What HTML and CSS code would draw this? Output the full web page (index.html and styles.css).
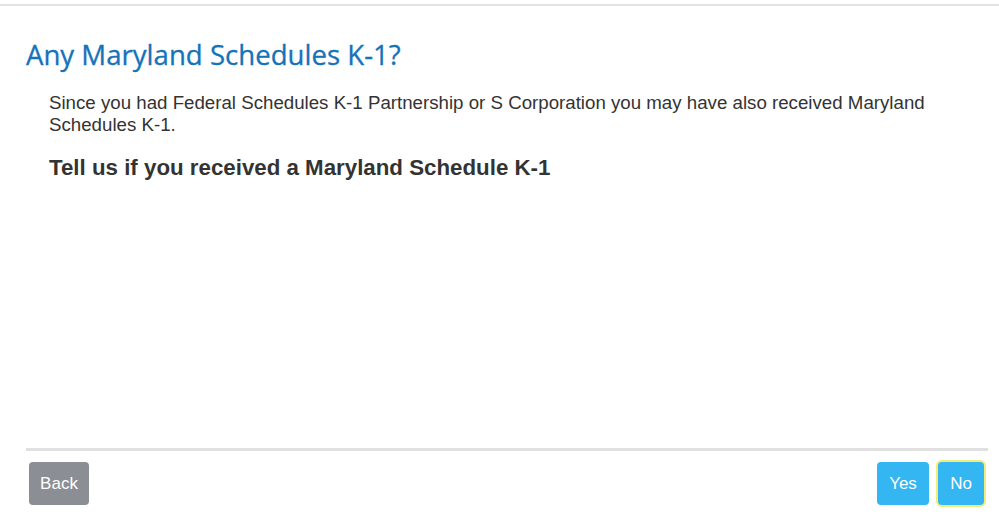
FILE: index.html
```html
<!DOCTYPE html>
<html>
<head>
<meta charset="utf-8">
<link rel="stylesheet" href="styles.css">
</head>
<body>
<div class="topline"></div>
<main class="page">
  <h1 class="title">Any Maryland Schedules K-1?</h1>
  <div class="content">
    <p class="intro">Since you had Federal Schedules K-1 Partnership or S Corporation you may have also received Maryland Schedules K-1.</p>
    <h2 class="question">Tell us if you received a Maryland Schedule K-1</h2>
  </div>
  <div class="spacer"></div>
  <footer class="footer">
    <button class="btn btn-back">Back</button>
    <div class="right">
      <button class="btn btn-primary btn-yes">Yes</button>
      <button class="btn btn-primary btn-focus">No</button>
    </div>
  </footer>
</main>
</body>
</html>
```

FILE: styles.css
```css
html, body {
  margin: 0;
  padding: 0;
  background: #fff;
  height: 517px;
  overflow: hidden;
}
.topline {
  height: 2px;
  margin-top: 4px;
  background: #e2e2e2;
}
.page {
  display: flex;
  flex-direction: column;
  height: 507px;
  padding: 0 11px 0 26px;
  box-sizing: border-box;
}
.title {
  margin: 30px 0 0 0;
  font-family: "Open Sans", "Lato", sans-serif;
  font-weight: 400;
  font-size: 27.6px;
  line-height: 36px;
  color: #1573b9;
  -webkit-text-stroke: 0.3px #1573b9;
}
.content {
  padding-left: 23px;
}
.intro {
  margin: 20px 0 0 0;
  font-family: "Liberation Sans", Arial, sans-serif;
  font-size: 18.7px;
  line-height: 22px;
  color: #333;
  max-width: 910px;
}
.question {
  margin: 19px 0 0 0;
  font-family: "Liberation Sans", Arial, sans-serif;
  font-weight: 700;
  font-size: 22.3px;
  line-height: 26px;
  color: #333;
}
.spacer {
  flex: 1;
}
.footer {
  border-top: 3px solid #e0e0e0;
  display: flex;
  justify-content: space-between;
  align-items: flex-start;
  padding: 11px 4px 0 3px;
  height: 51px;
}
.right {
  display: flex;
  gap: 9px;
}
.btn {
  font-family: "Liberation Sans", Arial, sans-serif;
  font-size: 17px;
  color: #fff;
  border: none;
  border-radius: 4px;
  height: 43px;
  padding: 0;
  cursor: pointer;
}
.btn-back {
  background: #8b8e94;
  width: 60px;
}
.btn-primary {
  background: #33b6f2;
}
.btn-yes {
  width: 52px;
}
.btn-focus {
  box-shadow: 0 0 0 2px #f2ec7a;
  width: 46px;
}
```
